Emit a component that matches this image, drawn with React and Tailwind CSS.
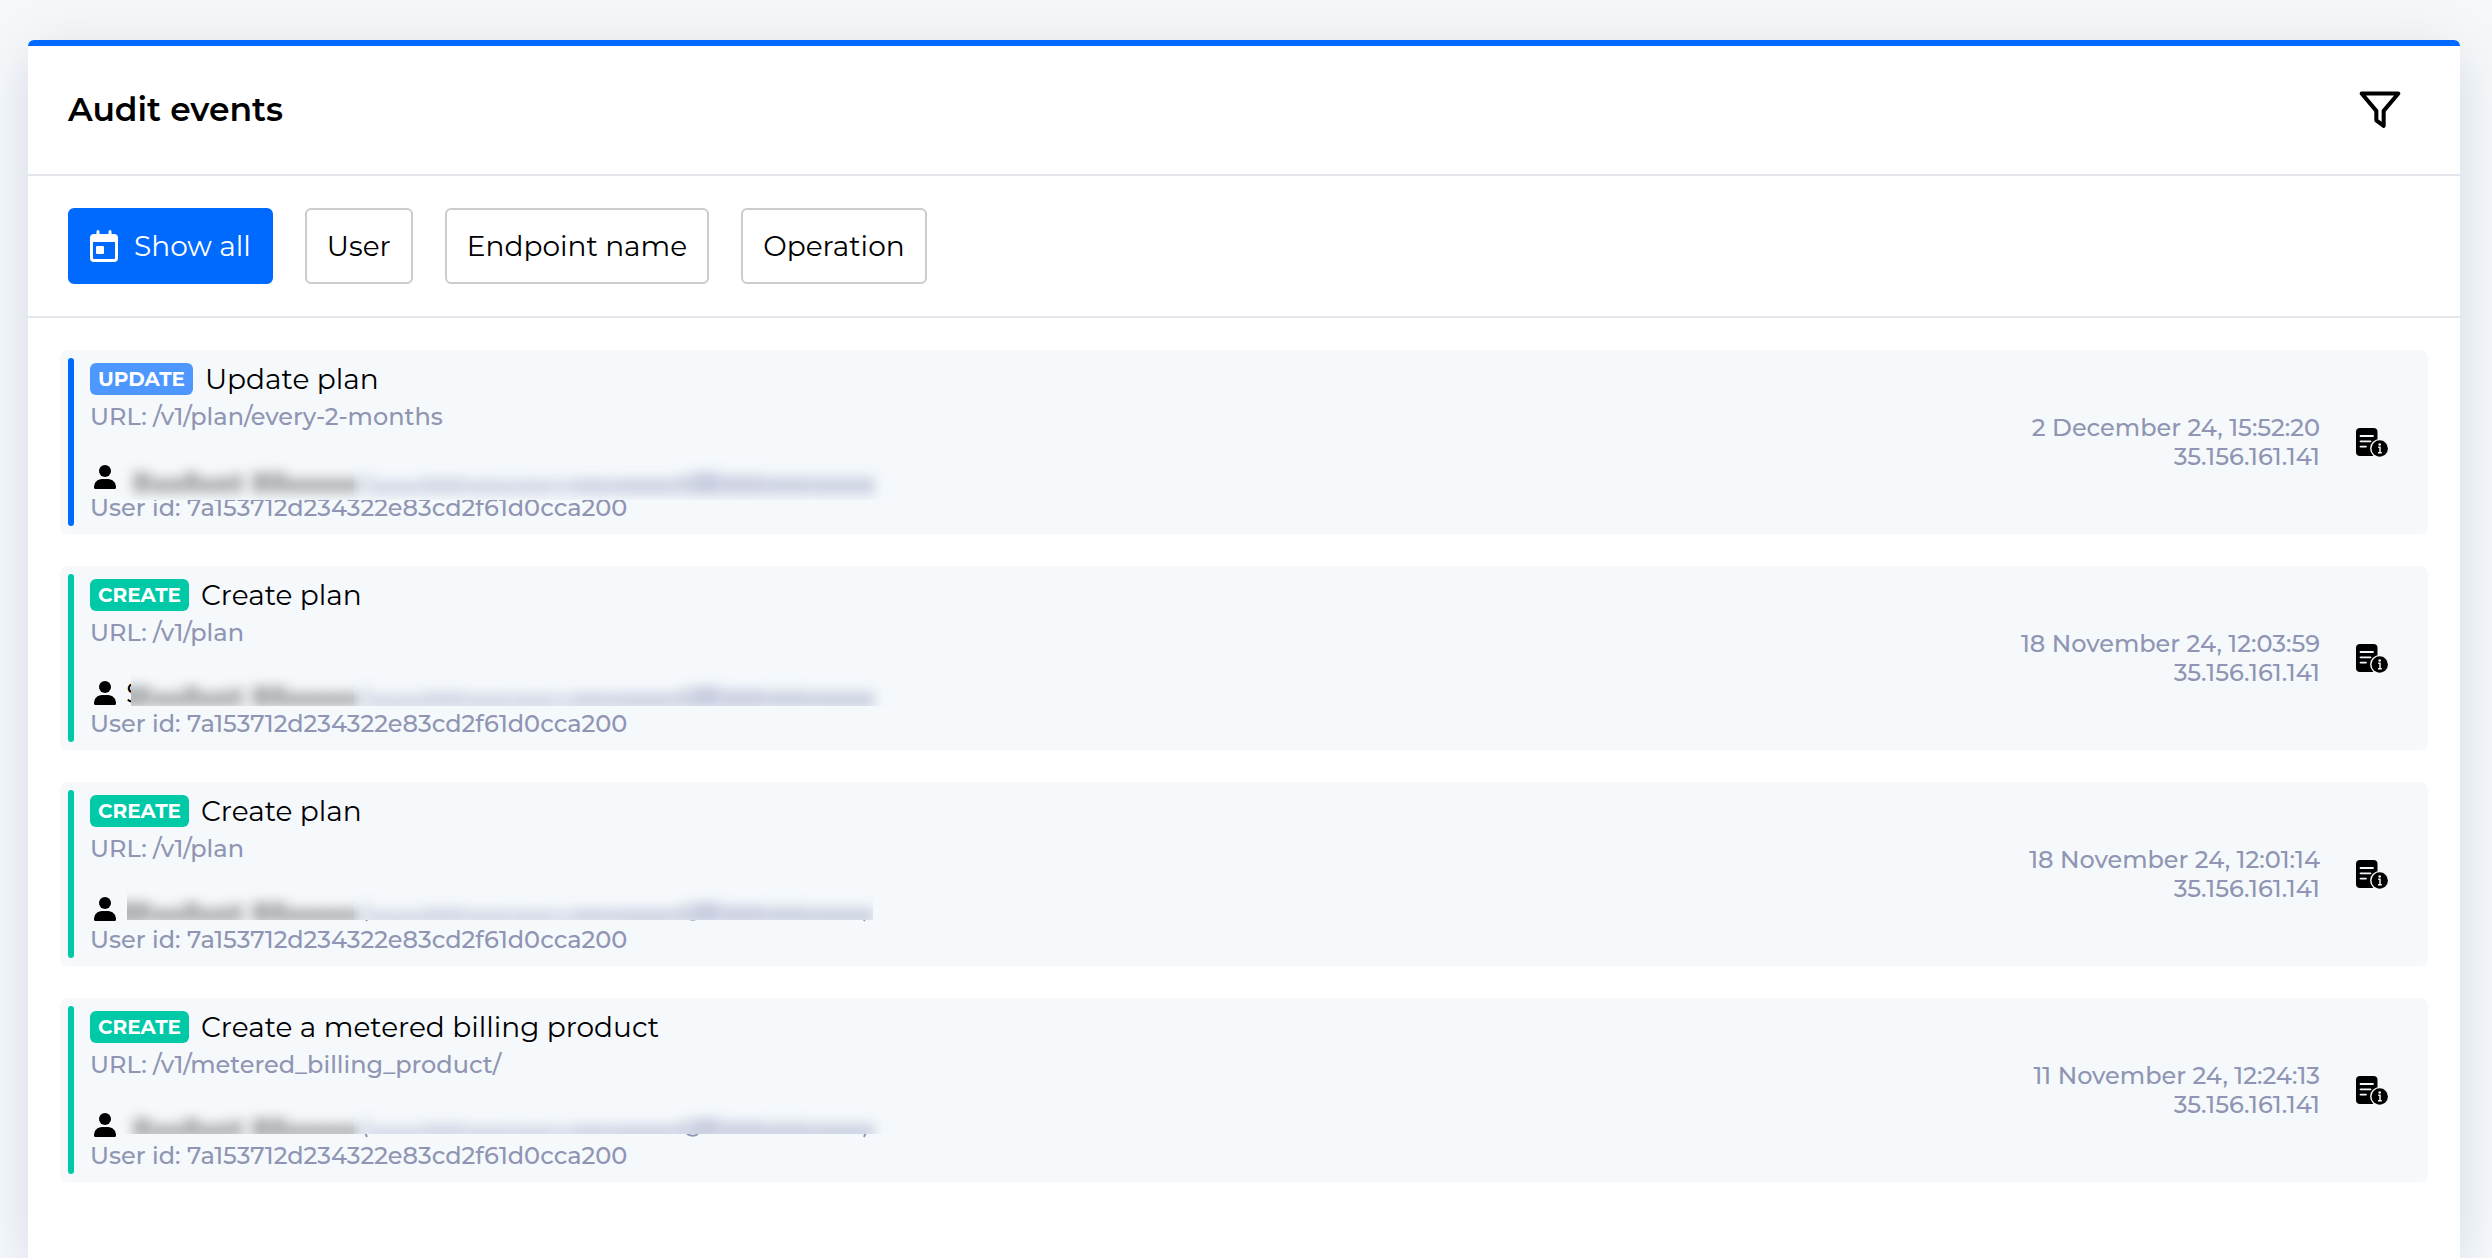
import React, { useState } from 'react';

const events = [
    {
        id: 1,
        type: 'UPDATE',
        title: 'Update plan',
        url: '/v1/plan/every-2-months',
        userId: '7a153712d234322e83cd2f61d0cca200',
        date: '2 December 24, 15:52:20',
        ip: '35.156.161.141',
        mask: { left: 0, width: 769, height: 44, shift: 2 },
    },
    {
        id: 2,
        type: 'CREATE',
        title: 'Create plan',
        url: '/v1/plan',
        userId: '7a153712d234322e83cd2f61d0cca200',
        date: '18 November 24, 12:03:59',
        ip: '35.156.161.141',
        initial: 'S',
        mask: { left: 10, width: 759, height: 34, shift: 0, hardEdge: true },
    },
    {
        id: 3,
        type: 'CREATE',
        title: 'Create plan',
        url: '/v1/plan',
        userId: '7a153712d234322e83cd2f61d0cca200',
        date: '18 November 24, 12:01:14',
        ip: '35.156.161.141',
        mask: { left: 6, width: 746, height: 32, shift: 0, tails: true, hardEdge: true },
    },
    {
        id: 4,
        type: 'CREATE',
        title: 'Create a metered billing product',
        url: '/v1/metered_billing_product/',
        userId: '7a153712d234322e83cd2f61d0cca200',
        date: '11 November 24, 12:24:13',
        ip: '35.156.161.141',
        mask: { left: 0, width: 769, height: 30, shift: 0, tails: true },
    },
];

const filters = ['Show all', 'User', 'Endpoint name', 'Operation'];

const App = () => {
    const [filter, setFilter] = useState('Show all');

    return (
        <div className="min-h-screen overflow-hidden bg-[#f5f9fc] pt-10 pl-7 pr-8 font-['Montserrat','Inter',sans-serif] text-black">
            <main className="min-h-[calc(100vh-40px)] rounded-t-md border-t-6 border-[#006aff] bg-white shadow-[0_8px_64px_rgba(0,0,0,0.1),0_30px_30px_rgba(80,110,255,0.06)]">
                <header className="flex h-[130px] items-center justify-between border-b-2 border-[#e4e4ec] pl-10 pr-[58px]">
                    <h1 className="text-[33px] font-semibold">Audit events</h1>
                    <button type="button" aria-label="Filter">
                        <FilterIcon />
                    </button>
                </header>

                {/* Quick filters */}
                <div className="flex gap-8 border-b-2 border-[#e4e4ec] px-10 py-8">
                    {filters.map((name) => (
                        <button
                            key={name}
                            type="button"
                            onClick={() => setFilter(name)}
                            className={`flex h-[76px] items-center gap-4 rounded-md border-2 px-5 text-[28px] ${filter === name
                                ? 'border-[#006aff] bg-[#006aff] text-white'
                                : 'border-[#cccccc] bg-white'
                                }`}
                        >
                            {name === 'Show all' && <CalendarIcon />}
                            {name}
                        </button>
                    ))}
                </div>

                <ul className="flex flex-col gap-8 p-8">
                    {events.map((event) => (
                        <EventRow key={event.id} event={event} />
                    ))}
                </ul>
            </main>
        </div>
    );
};

const EventRow = ({ event }) => {
    const isUpdate = event.type === 'UPDATE';

    return (
        <li className="flex items-center rounded-lg bg-[#f5f9fc] py-2 pl-2 pr-10">
            <div className={`w-1.5 self-stretch rounded-full ${isUpdate ? 'bg-[#006aff]' : 'bg-[#00c9a7]'}`} />
            <div className="ml-4 grow pb-0.5">
                <div className="flex h-[42px] items-center gap-3">
                    <span className={`flex h-8 items-center rounded-md px-2 text-xl font-bold text-white ${isUpdate ? 'bg-[#4d97ff]' : 'bg-[#00c9a7]'}`}>
                        {event.type}
                    </span>
                    <span className="text-[28px]">{event.title}</span>
                </div>
                <div className="mt-0.5 text-2xl leading-[30px] font-medium text-[#8f95b2]">URL: {event.url}</div>
                <div className="relative mt-[30px] flex h-[30px] items-center gap-2.5 pl-1">
                    <UserIcon />
                    {event.initial && <span className="text-[28px]">{event.initial}</span>}
                    <MaskedUser id={event.id} {...event.mask} />
                </div>
                <div className="text-2xl leading-8 font-medium text-[#8f95b2]">User id: {event.userId}</div>
            </div>
            <div className="text-right text-2xl leading-[29px] font-medium text-[#8f95b2]">
                <div>{event.date}</div>
                <div>{event.ip}</div>
            </div>
            <button type="button" aria-label="Show details" className="ml-9">
                <DetailsIcon />
            </button>
        </li>
    );
};

// [x, width, height, opacity] of every smudge of the hidden name and address
const nameSmudges = [
    [12, 18, 21, 0.28], [32, 15, 15, 0.28], [48, 14, 15, 0.28], [63, 15, 21, 0.28], [79, 15, 15, 0.28], [95, 14, 16, 0.28], [110, 12, 19, 0.26],
    [131, 18, 21, 0.28], [150, 15, 21, 0.28], [166, 14, 15, 0.28], [181, 14, 15, 0.28], [196, 14, 15, 0.28], [211, 14, 15, 0.28], [226, 13, 15, 0.28],
];
const mailSmudges = [
    [243, 8, 22, 0.24], [252, 46, 15, 0.28], [299, 47, 18, 0.28], [347, 44, 16, 0.28], [392, 40, 16, 0.28], [433, 17, 16, 0.24],
    [451, 41, 17, 0.3], [493, 61, 17, 0.31], [555, 15, 20, 0.32], [571, 28, 23, 0.38], [600, 44, 20, 0.34], [645, 45, 19, 0.32], [691, 63, 18, 0.32],
];

const MaskedUser = ({ id, left, width, height, shift, tails, hardEdge }) => (
    <svg
        className="pointer-events-none absolute -top-1.5 left-[31px]"
        width="769"
        height="44"
        viewBox="0 0 769 44"
        aria-hidden="true"
    >
        <defs>
            <filter id={`blur-${id}`} x="-10%" y="-100%" width="120%" height="300%">
                <feGaussianBlur stdDeviation="6" />
            </filter>
            <clipPath id={`clip-${id}`}>
                <rect x={left} y="0" width={width} height={height} />
            </clipPath>
        </defs>
        {tails && (
            <g fill="none" stroke="#8f95b2" strokeWidth="2">
                <path d="M244 28q1 3 2 5" />
                <path d="M565 29q6 5 12 1" />
                <path d="M745 28q-1 3-2 5" />
            </g>
        )}
        <g clipPath={`url(#clip-${id})`}>
            <rect width="769" height="44" fill="#f5f9fc" />
            <g filter={`url(#blur-${id})`}>
                {hardEdge && <rect x="-12" y="14" width="24" height="22" fill="#000" opacity="0.28" />}
                {nameSmudges.map(([x, w, h, opacity]) => (
                    <rect key={x} x={x} y={35 + shift - h} width={w} height={h} fill="#000" opacity={opacity} />
                ))}
                {mailSmudges.map(([x, w, h, opacity]) => (
                    <rect key={x} x={x} y={37 + shift - h} width={w} height={h} fill="#8488b2" opacity={opacity} />
                ))}
            </g>
        </g>
    </svg>
);

const FilterIcon = () => (
    <svg width="44" height="44" viewBox="0 0 24 24" fill="none" stroke="currentColor" strokeWidth="2.2" strokeLinecap="round" strokeLinejoin="round">
        <polygon points="22 3 2 3 10 12.46 10 17.6 14 20.6 14 12.46 22 3" />
    </svg>
);

const CalendarIcon = () => (
    <svg width="28" height="32" viewBox="0 0 28 32" fill="none">
        <path d="M8 1.5V6M20 1.5V6" stroke="currentColor" strokeWidth="3" strokeLinecap="round" />
        <path fill="currentColor" fillRule="evenodd" d="M4 4h20a4 4 0 0 1 4 4v20a4 4 0 0 1-4 4H4a4 4 0 0 1-4-4V8a4 4 0 0 1 4-4zM3 12v16a1 1 0 0 0 1 1h20a1 1 0 0 0 1-1V12z" />
        <rect x="6" y="16" width="8" height="8" rx="1" fill="currentColor" />
    </svg>
);

const UserIcon = () => (
    <svg width="22" height="24" viewBox="0 0 22 24" fill="currentColor">
        <circle cx="11" cy="6" r="6" />
        <path d="M0 22.5C0 17.5 3.5 14 8 14h6c4.5 0 8 3.5 8 8.5q0 1.5-1.5 1.5h-19Q0 24 0 22.5z" />
    </svg>
);

const DetailsIcon = () => (
    <svg width="32" height="29" viewBox="0 0 32 29" fill="none">
        <rect width="21.5" height="28" rx="4" fill="#000" />
        <path d="M4.5 8h12.5M4.5 13.3h10M4.5 18.6h5.5" stroke="#f5f9fc" strokeWidth="1.8" strokeLinecap="round" />
        <circle cx="23.7" cy="20.5" r="9.6" fill="#f5f9fc" />
        <circle cx="23.7" cy="20.5" r="8.2" fill="#000" />
        <circle cx="23.7" cy="16.5" r="1.3" fill="#f5f9fc" />
        <path d="M22.2 19.3h1.8v5.2M22 24.7h3.8" stroke="#f5f9fc" strokeWidth="1.5" />
    </svg>
);

export default App;
